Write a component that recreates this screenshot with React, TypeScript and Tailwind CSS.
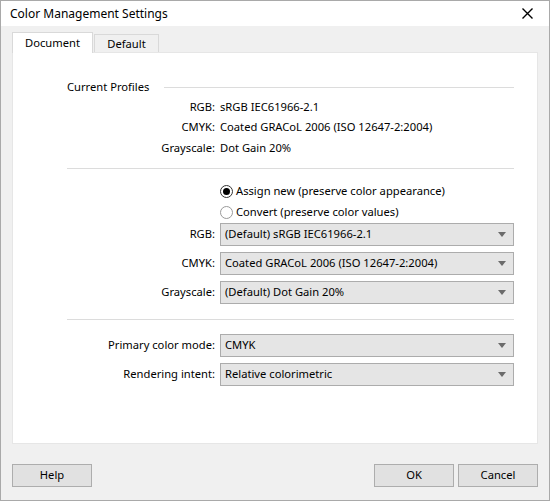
import React from 'react';

const FONT = { fontFamily: '"Noto Sans", "Open Sans", sans-serif' };

function Arrow() {
  return (
    <svg width="8" height="5" viewBox="0 0 8 5" className="shrink-0">
      <path d="M0 0 H8 L4 5 Z" fill="#6b6b6b" />
    </svg>
  );
}

function Select({ value }: { value: string }) {
  return (
    <div className="flex h-[23px] w-[294px] items-center justify-between border border-[#acacac] bg-[#e5e5e5] pl-[4px] pr-[7px]">
      <span className="text-black">{value}</span>
      <Arrow />
    </div>
  );
}

function Radio({ checked, label }: { checked?: boolean; label: string }) {
  return (
    <div className="flex h-[21px] items-center">
      <span
        className={
          checked
            ? 'flex h-[13px] w-[13px] items-center justify-center rounded-full border border-[#333333] bg-white'
            : 'flex h-[13px] w-[13px] items-center justify-center rounded-full border border-[#9a9a9a] bg-white'
        }
      >
        {checked && <span className="h-[7px] w-[7px] rounded-full bg-black" />}
      </span>
      <span className="ml-[3px]">{label}</span>
    </div>
  );
}

function LabelRow({ label, children, h }: { label: string; children: React.ReactNode; h: string }) {
  return (
    <div className={`flex items-center ${h}`}>
      <span className="w-[148px] shrink-0 text-right">{label}</span>
      <div className="ml-[5px]">{children}</div>
    </div>
  );
}

export default function App() {
  return (
    <div
      className="flex h-[501px] w-[550px] flex-col border border-[#a9a9a9] bg-[#f0f0f0] text-[11.2px] text-black"
      style={FONT}
    >
      {/* Title bar */}
      <div className="flex h-[25px] items-center justify-between bg-white pl-[9px] pr-[16px]">
        <span className="text-[12px]">Color Management Settings</span>
        <svg width="11" height="11" viewBox="0 0 11 11">
          <path d="M0.5 0.5 L10.5 10.5 M10.5 0.5 L0.5 10.5" stroke="#000" strokeWidth="1.4" />
        </svg>
      </div>

      <div className="flex flex-1 flex-col px-[11px]">
        {/* Tabs */}
        <div className="mt-[7px] flex h-[20px] items-end">
          <div className="relative z-10 flex h-[21px] w-[81px] items-center justify-center border border-b-0 border-[#d9d9d9] bg-white">
            Document
          </div>
          <div className="ml-[1px] flex h-[19px] w-[65px] items-center justify-center border border-b-0 border-[#d9d9d9] bg-[#f0f0f0]">
            Default
          </div>
        </div>

        {/* Panel */}
        <div className="-mt-[1px] flex h-[392px] w-[526px] flex-col border border-[#e6e6e6] bg-white pl-[54px] pr-[23px] pt-[24px]">
          <div className="flex h-[20px] items-center">
            <span>Current Profiles</span>
            <div className="ml-[15px] h-px flex-1 bg-[#dcdcdc]" />
          </div>
          <LabelRow label="RGB:" h="h-[20.5px]">sRGB IEC61966-2.1</LabelRow>
          <LabelRow label="CMYK:" h="h-[20.5px]">Coated GRACoL 2006 (ISO 12647-2:2004)</LabelRow>
          <LabelRow label="Grayscale:" h="h-[20.5px]">Dot Gain 20%</LabelRow>

          <div className="mt-[9px] h-px bg-[#dcdcdc]" />

          <div className="ml-[153px] mt-[12px] flex flex-col">
            <Radio checked label="Assign new (preserve color appearance)" />
            <Radio label="Convert (preserve color values)" />
          </div>

          <div className="flex flex-col gap-[6px]">
            <LabelRow label="RGB:" h="h-[23px]">
              <Select value="(Default) sRGB IEC61966-2.1" />
            </LabelRow>
            <LabelRow label="CMYK:" h="h-[23px]">
              <Select value="Coated GRACoL 2006 (ISO 12647-2:2004)" />
            </LabelRow>
            <LabelRow label="Grayscale:" h="h-[23px]">
              <Select value="(Default) Dot Gain 20%" />
            </LabelRow>
          </div>

          <div className="mt-[15px] h-px bg-[#dcdcdc]" />

          <div className="mt-[14px] flex flex-col gap-[6px]">
            <LabelRow label="Primary color mode:" h="h-[23px]">
              <Select value="CMYK" />
            </LabelRow>
            <LabelRow label="Rendering intent:" h="h-[23px]">
              <Select value="Relative colorimetric" />
            </LabelRow>
          </div>
        </div>

        {/* Buttons */}
        <div className="mt-[20px] flex items-center">
          <button className="h-[23px] w-[80px] border border-[#adadad] bg-[#e1e1e1]">Help</button>
          <div className="flex-1" />
          <button className="h-[23px] w-[80px] border border-[#adadad] bg-[#e1e1e1]">OK</button>
          <button className="ml-[4px] h-[23px] w-[80px] border border-[#adadad] bg-[#e1e1e1]">Cancel</button>
        </div>
      </div>
    </div>
  );
}
